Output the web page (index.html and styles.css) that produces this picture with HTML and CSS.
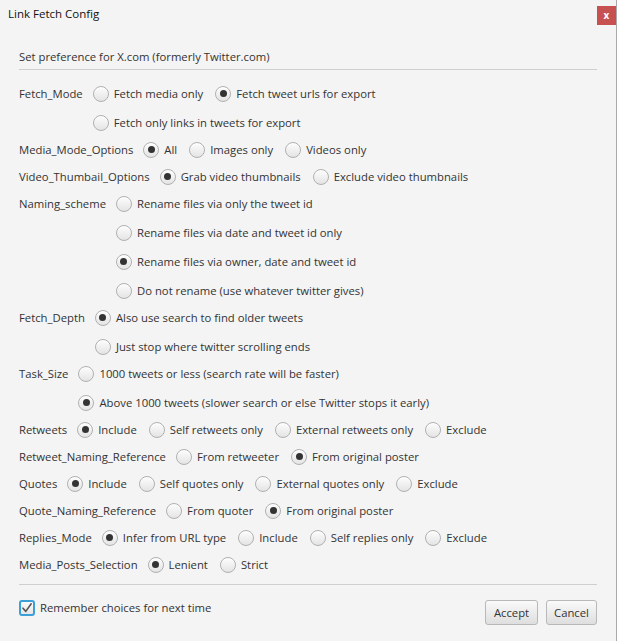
FILE: index.html
```html
<!DOCTYPE html>
<html>
<head>
<meta charset="utf-8">
<title>Link Fetch Config</title>
<link rel="stylesheet" href="styles.css">
</head>
<body>
<div class="window">
  <div class="titlebar">
    <span class="title">Link Fetch Config</span>
    <span class="close">x</span>
  </div>
  <div class="content">
    <div class="header">Set preference for X.com (formerly Twitter.com)</div>
    <div class="rows">
      <div class="row">
        <span class="label">Fetch_Mode</span>
        <div class="opts">
          <div class="line">
            <span class="radio"><span class="circle"></span>Fetch media only</span>
            <span class="radio on"><span class="circle"></span>Fetch tweet urls for export</span>
          </div>
          <div class="line">
            <span class="radio"><span class="circle"></span>Fetch only links in tweets for export</span>
          </div>
        </div>
      </div>
      <div class="row">
        <span class="label">Media_Mode_Options</span>
        <div class="opts">
          <div class="line">
            <span class="radio on"><span class="circle"></span>All</span>
            <span class="radio"><span class="circle"></span>Images only</span>
            <span class="radio"><span class="circle"></span>Videos only</span>
          </div>
        </div>
      </div>
      <div class="row">
        <span class="label">Video_Thumbail_Options</span>
        <div class="opts">
          <div class="line">
            <span class="radio on"><span class="circle"></span>Grab video thumbnails</span>
            <span class="radio"><span class="circle"></span>Exclude video thumbnails</span>
          </div>
        </div>
      </div>
      <div class="row">
        <span class="label">Naming_scheme</span>
        <div class="opts">
          <div class="line"><span class="radio"><span class="circle"></span>Rename files via only the tweet id</span></div>
          <div class="line"><span class="radio"><span class="circle"></span>Rename files via date and tweet id only</span></div>
          <div class="line"><span class="radio on"><span class="circle"></span>Rename files via owner, date and tweet id</span></div>
          <div class="line"><span class="radio"><span class="circle"></span>Do not rename (use whatever twitter gives)</span></div>
        </div>
      </div>
      <div class="row">
        <span class="label">Fetch_Depth</span>
        <div class="opts">
          <div class="line"><span class="radio on"><span class="circle"></span>Also use search to find older tweets</span></div>
          <div class="line"><span class="radio"><span class="circle"></span>Just stop where twitter scrolling ends</span></div>
        </div>
      </div>
      <div class="row">
        <span class="label">Task_Size</span>
        <div class="opts">
          <div class="line"><span class="radio"><span class="circle"></span>1000 tweets or less (search rate will be faster)</span></div>
          <div class="line"><span class="radio on"><span class="circle"></span>Above 1000 tweets (slower search or else Twitter stops it early)</span></div>
        </div>
      </div>
      <div class="row">
        <span class="label">Retweets</span>
        <div class="opts">
          <div class="line">
            <span class="radio on"><span class="circle"></span>Include</span>
            <span class="radio"><span class="circle"></span>Self retweets only</span>
            <span class="radio"><span class="circle"></span>External retweets only</span>
            <span class="radio"><span class="circle"></span>Exclude</span>
          </div>
        </div>
      </div>
      <div class="row">
        <span class="label">Retweet_Naming_Reference</span>
        <div class="opts">
          <div class="line">
            <span class="radio"><span class="circle"></span>From retweeter</span>
            <span class="radio on"><span class="circle"></span>From original poster</span>
          </div>
        </div>
      </div>
      <div class="row">
        <span class="label">Quotes</span>
        <div class="opts">
          <div class="line">
            <span class="radio on"><span class="circle"></span>Include</span>
            <span class="radio"><span class="circle"></span>Self quotes only</span>
            <span class="radio"><span class="circle"></span>External quotes only</span>
            <span class="radio"><span class="circle"></span>Exclude</span>
          </div>
        </div>
      </div>
      <div class="row">
        <span class="label">Quote_Naming_Reference</span>
        <div class="opts">
          <div class="line">
            <span class="radio"><span class="circle"></span>From quoter</span>
            <span class="radio on"><span class="circle"></span>From original poster</span>
          </div>
        </div>
      </div>
      <div class="row">
        <span class="label">Replies_Mode</span>
        <div class="opts">
          <div class="line">
            <span class="radio on"><span class="circle"></span>Infer from URL type</span>
            <span class="radio"><span class="circle"></span>Include</span>
            <span class="radio"><span class="circle"></span>Self replies only</span>
            <span class="radio"><span class="circle"></span>Exclude</span>
          </div>
        </div>
      </div>
      <div class="row">
        <span class="label">Media_Posts_Selection</span>
        <div class="opts">
          <div class="line">
            <span class="radio on"><span class="circle"></span>Lenient</span>
            <span class="radio"><span class="circle"></span>Strict</span>
          </div>
        </div>
      </div>
    </div>
    <div class="footer">
      <span class="check">
        <span class="box"><svg width="12" height="12" viewBox="0 0 12 12"><path d="M2 6.2 L4.8 9.4 L10.2 1.8" fill="none" stroke="#555" stroke-width="1.6" stroke-linecap="round" stroke-linejoin="round"/></svg></span>
        Remember choices for next time
      </span>
      <div class="buttons">
        <span class="btn accept">Accept</span>
        <span class="btn cancel">Cancel</span>
      </div>
    </div>
  </div>
</div>
</body>
</html>
```

FILE: styles.css
```css
html, body {
  margin: 0;
  padding: 0;
  background: #ffffff;
}
body {
  font-family: "Open Sans", "Liberation Sans", sans-serif;
  font-size: 11.3px;
  color: #333333;
}
.window {
  width: 616px;
  height: 641px;
  background: #f4f4f4;
  border-right: 1px solid #a9a9a9;
  box-sizing: content-box;
}
.titlebar {
  height: 30px;
  display: flex;
  justify-content: space-between;
  align-items: flex-start;
  padding-left: 8px;
  box-sizing: border-box;
}
.title {
  margin-top: 6px;
  line-height: 16px;
  font-size: 11.5px;
  color: #111;
}
.close {
  margin-top: 6px;
  width: 19px;
  height: 19px;
  background: #c75050;
  color: #fff;
  font-weight: bold;
  font-size: 10px;
  line-height: 18px;
  text-align: center;
}
.content {
  padding: 19px 19px 0 19px;
}
.header {
  line-height: 16px;
  padding-bottom: 4px;
  border-bottom: 1px solid #cfcfcf;
}
.rows {
  margin-top: 15px;
  display: flex;
  flex-direction: column;
  gap: 10px;
  padding-bottom: 11px;
  border-bottom: 1px solid #cfcfcf;
}
.row {
  display: flex;
  align-items: flex-start;
  gap: 10px;
}
.label {
  line-height: 17px;
  white-space: nowrap;
}
.opts {
  display: flex;
  flex-direction: column;
  gap: 12px;
}
.line {
  display: flex;
  gap: 12px;
  height: 17px;
}
.radio {
  display: flex;
  align-items: center;
  gap: 5px;
  line-height: 17px;
  white-space: nowrap;
}
.circle {
  width: 14px;
  height: 14px;
  border-radius: 50%;
  border: 1px solid #b0b0b0;
  background: linear-gradient(#fdfdfd, #e4e4e4);
  box-shadow: inset 0 1px 0 #ffffff;
  display: flex;
  align-items: center;
  justify-content: center;
  flex: none;
}
.radio.on .circle::after {
  content: "";
  width: 7px;
  height: 7px;
  border-radius: 50%;
  background: #333333;
}
.footer {
  display: flex;
  justify-content: space-between;
  align-items: flex-start;
  padding-top: 15px;
}
.check {
  display: flex;
  align-items: center;
  gap: 5px;
  line-height: 16px;
}
.box {
  width: 12px;
  height: 12px;
  border-radius: 3px;
  border: 2px solid #3b9fd8;
  background: linear-gradient(#fbfbfb, #e6e6e6);
  display: flex;
  align-items: center;
  justify-content: center;
  flex: none;
}
.buttons {
  display: flex;
  gap: 8px;
}
.btn {
  height: 25px;
  box-sizing: border-box;
  border: 1px solid #b8b8b8;
  border-radius: 3px;
  background: linear-gradient(#fafafa, #dedede);
  line-height: 23px;
  text-align: center;
}
.accept { width: 53px; }
.cancel { width: 51px; }
```
